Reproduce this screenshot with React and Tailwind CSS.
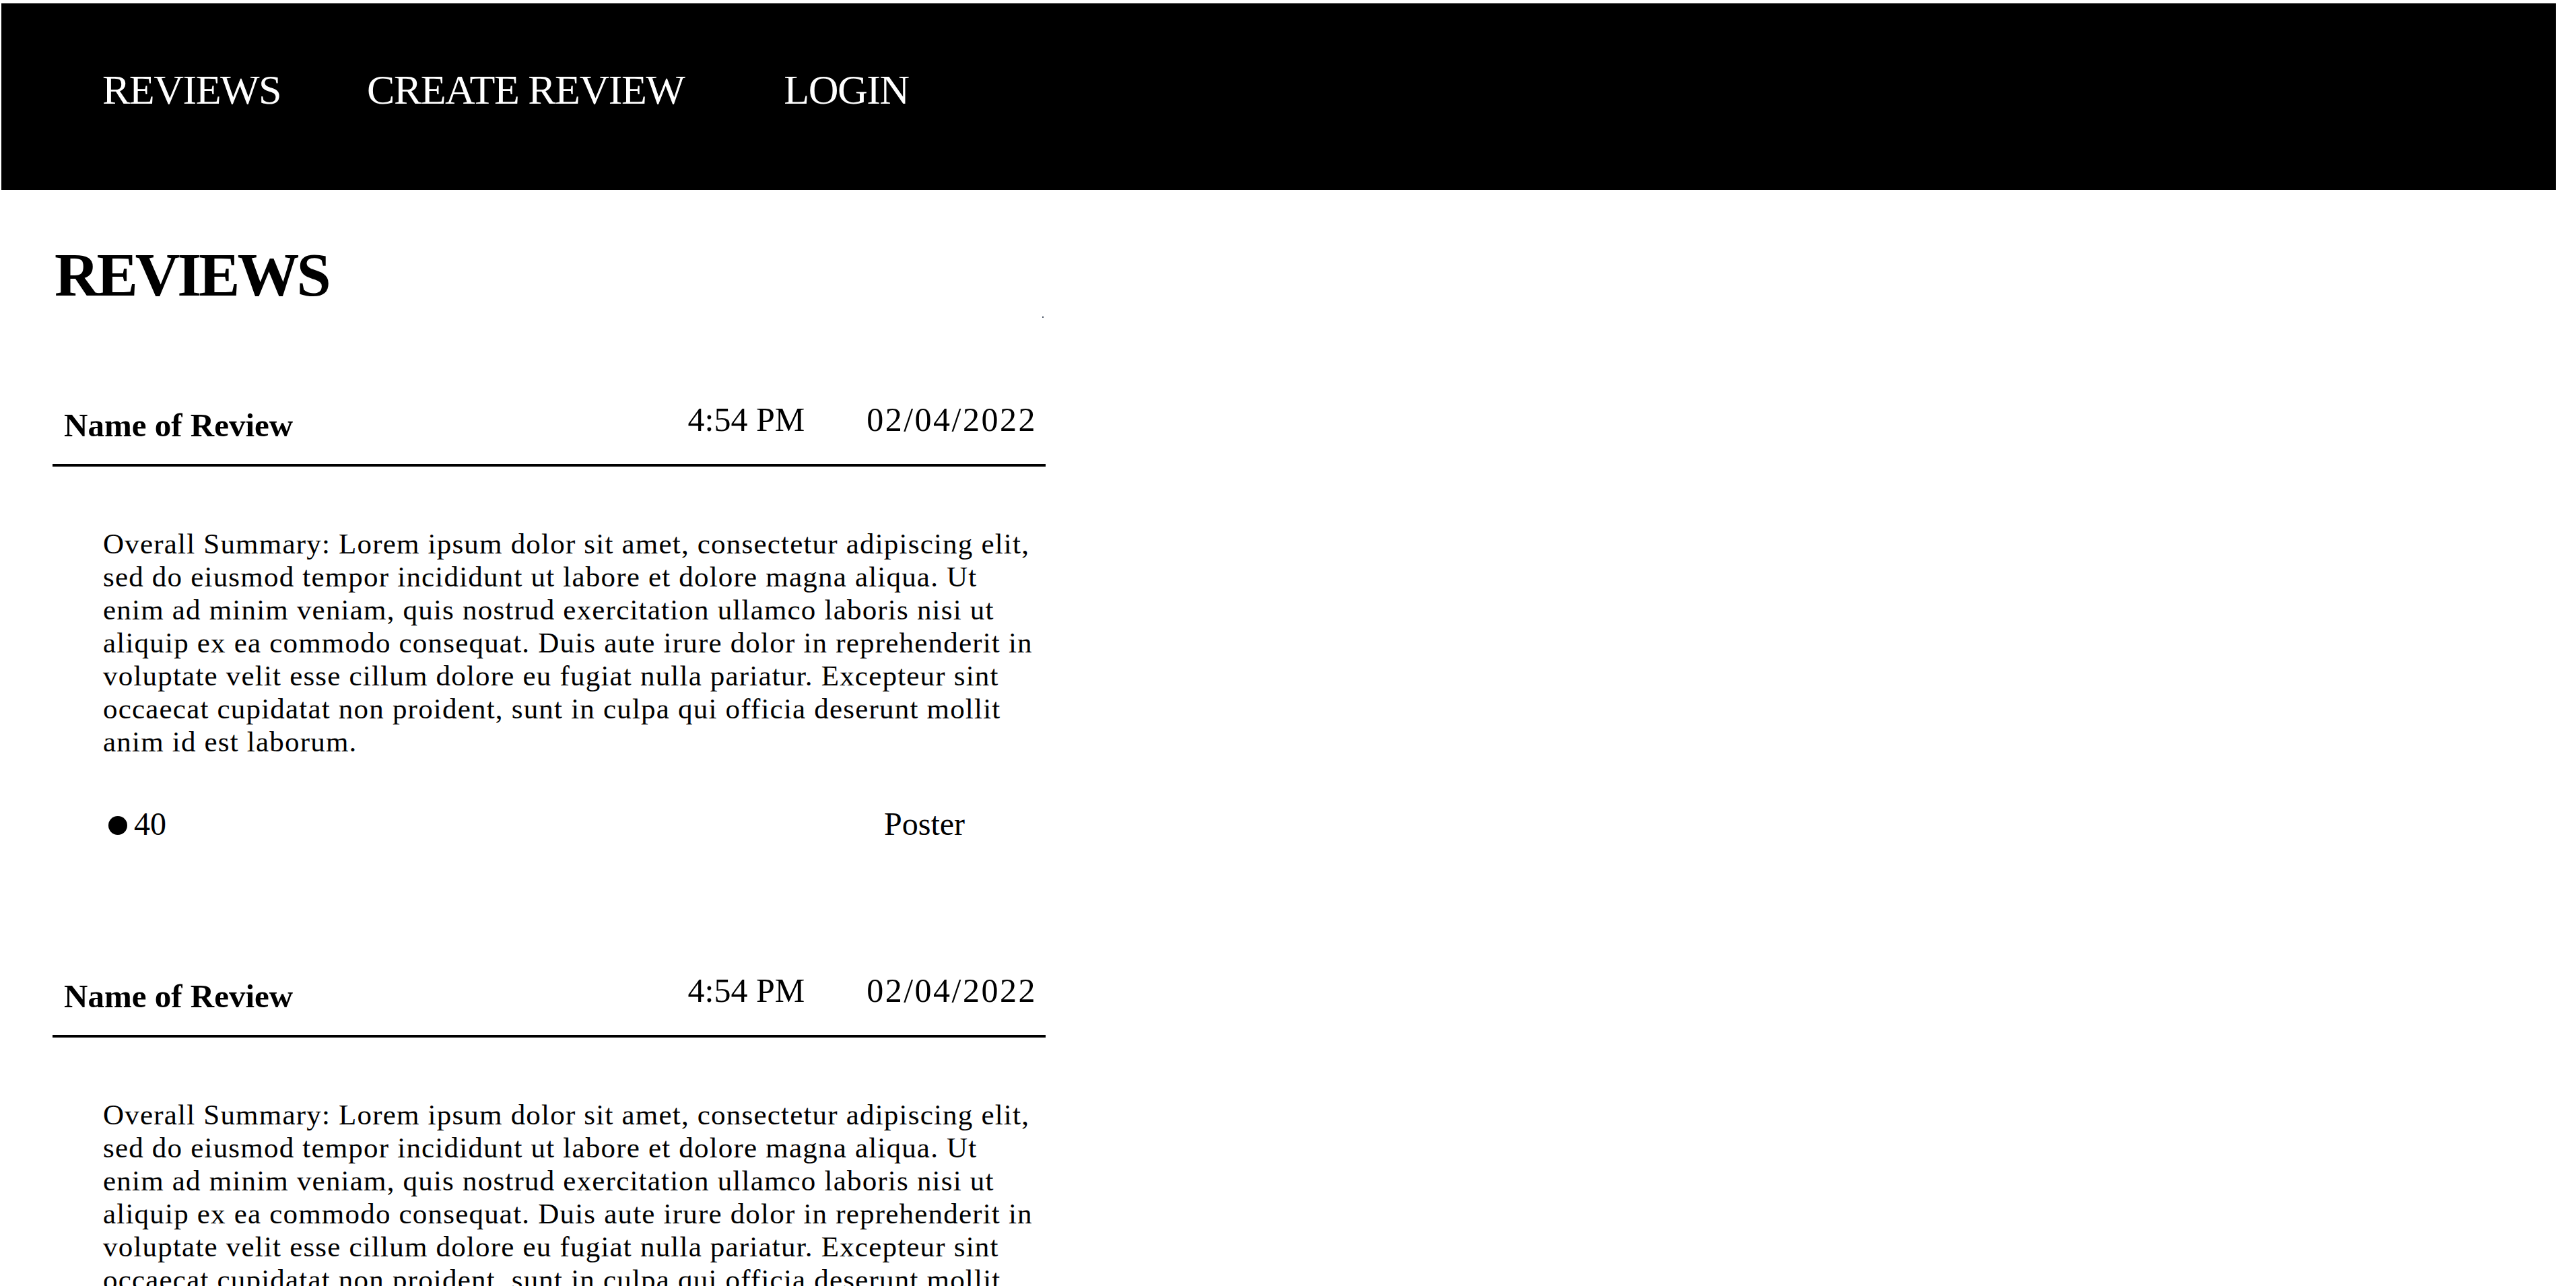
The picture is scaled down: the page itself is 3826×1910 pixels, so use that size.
import React from 'react'

const SUMMARY = [
  'Overall Summary: Lorem ipsum dolor sit amet, consectetur adipiscing elit,',
  'sed do eiusmod tempor incididunt ut labore et dolore magna aliqua. Ut',
  'enim ad minim veniam, quis nostrud exercitation ullamco laboris nisi ut',
  'aliquip ex ea commodo consequat. Duis aute irure dolor in reprehenderit in',
  'voluptate velit esse cillum dolore eu fugiat nulla pariatur. Excepteur sint',
  'occaecat cupidatat non proident, sunt in culpa qui officia deserunt mollit',
  'anim id est laborum.',
]

const REVIEWS = [
  { id: 1, name: 'Name of Review', time: '4:54 PM', date: '02/04/2022', likes: 40, poster: 'Poster' },
  { id: 2, name: 'Name of Review', time: '4:54 PM', date: '02/04/2022', likes: 40, poster: 'Poster' },
]

function ReviewCard({ review }){
  return (
    <div className="w-[1475px]">
      <div className="flex items-start justify-between border-b-4 border-black pl-[17px] pr-[13px] pb-[33px]">
        <h3 className="mt-[9px] text-[49px] leading-[49px] font-bold">{review.name}</h3>
        <div className="flex gap-[92px] text-[50px] leading-[50px]">
          <span>{review.time}</span>
          <span className="tracking-[2.5px]">{review.date}</span>
        </div>
      </div>

      <p className="mt-[90px] pl-[75px] text-[43px] leading-[49px] tracking-[1.2px] whitespace-nowrap">
        {SUMMARY.map((line, i) => (
          <React.Fragment key={i}>
            {line}
            {i < SUMMARY.length - 1 && <br />}
          </React.Fragment>
        ))}
      </p>

      <div className="mt-[74px] flex items-center justify-between pl-[83px] pr-[120px] text-[48px] leading-[48px]">
        <div className="flex items-center gap-[10px]">
          <span className="mt-[4px] h-[28px] w-[28px] rounded-full bg-black" />
          <span>{review.likes}</span>
        </div>
        <span>{review.poster}</span>
      </div>
    </div>
  )
}

export default function App(){
  return (
    <div className="min-h-screen bg-white pt-[5px] text-black font-['Liberation_Serif',serif]">
      <header className="ml-[2px] mr-[30px] flex h-[277px] items-center bg-black pb-[22px] pl-[150px]">
        <nav className="flex text-[62px] leading-[62px] tracking-[-1.5px] text-white">
          <a href="#" className="whitespace-nowrap">REVIEWS</a>
          <a href="#" className="ml-[128px] whitespace-nowrap">CREATE REVIEW</a>
          <a href="#" className="ml-[148px] whitespace-nowrap">LOGIN</a>
        </nav>
      </header>

      <main className="pl-[78px]">
        <div className="flex w-[1475px] items-start justify-between pt-[80px]">
          <h1 className="ml-[3px] text-[92px] leading-[92px] font-bold tracking-[-4px]">REVIEWS</h1>
          <span className="mt-[108px] mr-[3px] h-[2px] w-[2px] bg-gray-600" />
        </div>

        <div className="mt-[126px] flex flex-col gap-[198px] pb-[100px]">
          {REVIEWS.map(r => <ReviewCard key={r.id} review={r} />)}
        </div>
      </main>
    </div>
  )
}
